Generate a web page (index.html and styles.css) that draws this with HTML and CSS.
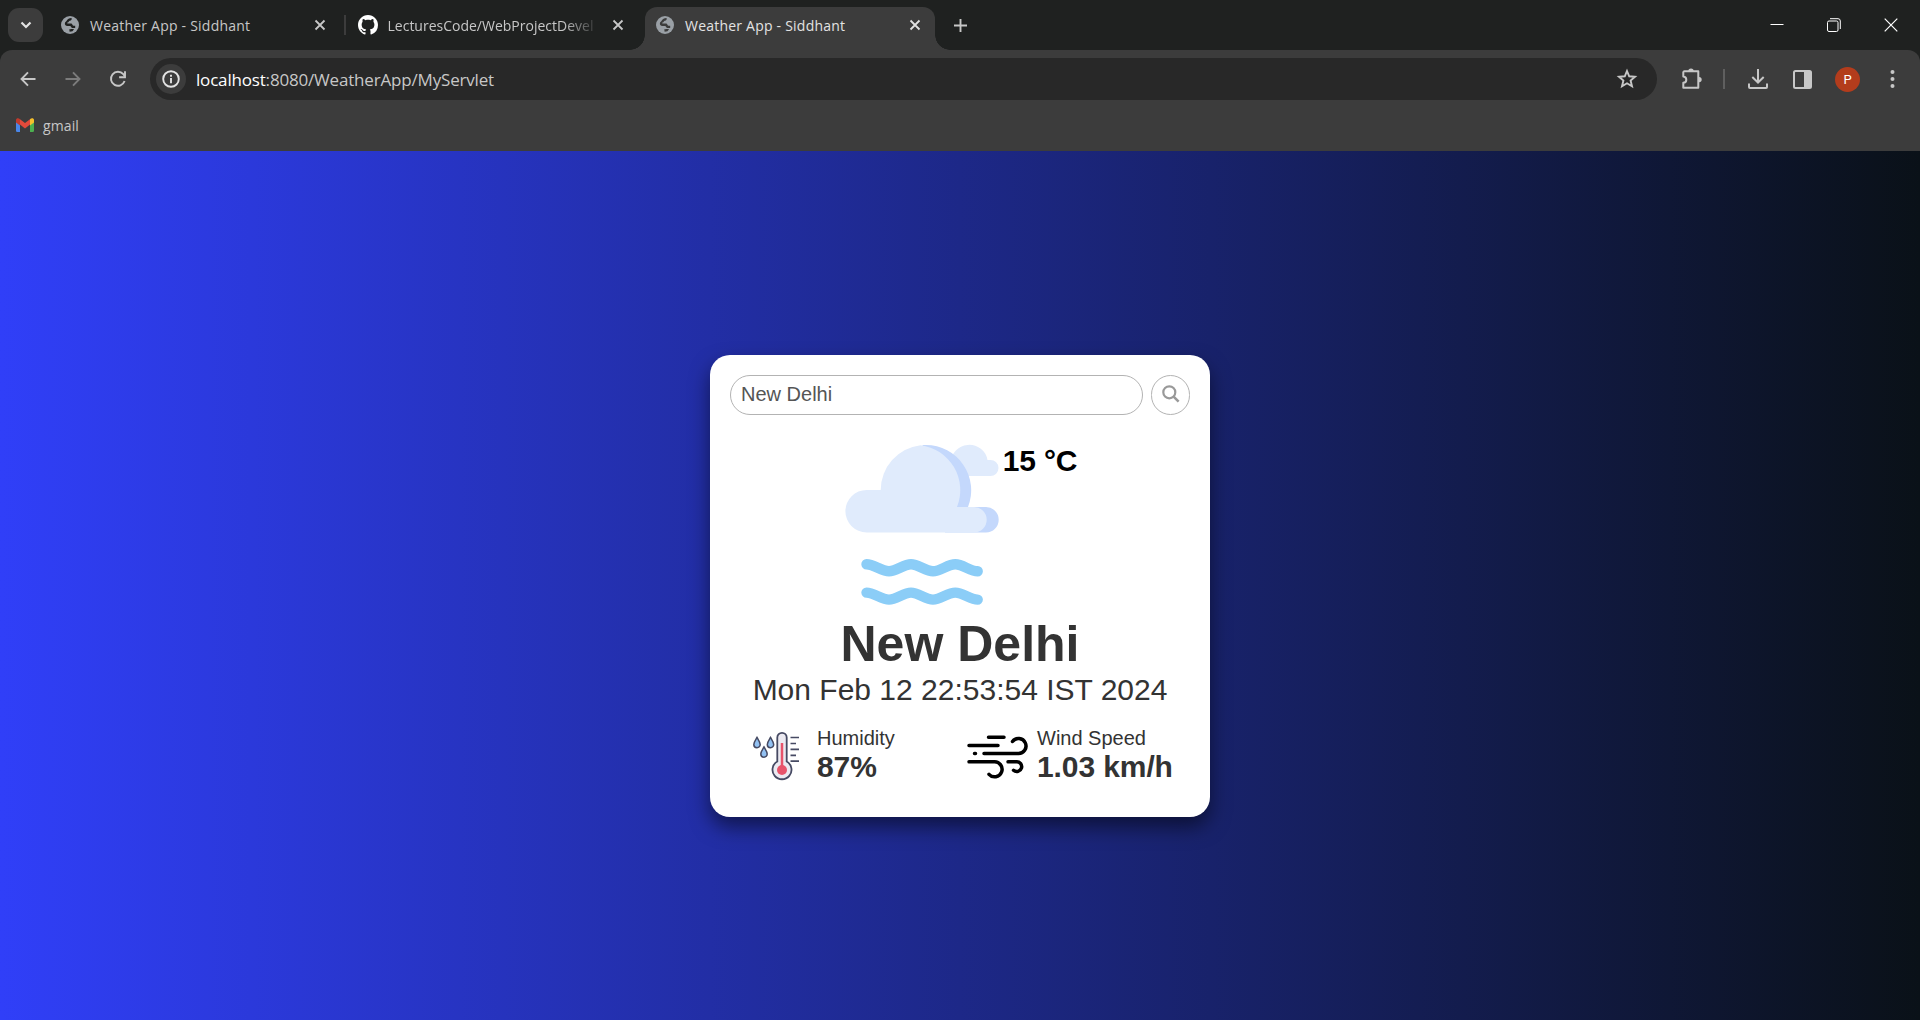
FILE: index.html
```html
<!DOCTYPE html>
<html lang="en">
<head>
<meta charset="utf-8">
<title>Weather App - Siddhant</title>
<link rel="stylesheet" href="styles.css">
</head>
<body>
<svg class="defs" width="0" height="0" aria-hidden="true">
  <symbol id="globe" viewBox="0 0 18 18">
    <circle cx="9" cy="9" r="9" fill="#9aa0a6"/>
    <path fill="currentColor" d="M10.500 2C11.200 3.500 10.300 4.600 8.800 4.700C7.800 4.800 8 6.300 6.600 6.500C5.900 6.700 6 7.500 6.700 7.500H10C11.700 7.600 11 9.500 12.500 9.700H14.200V12H11.500C10 12 10.300 10 8.800 9.900H6.500C4.300 9.800 3.700 8.500 3.900 7.200C4 5.800 5.500 5.600 6 4.300C6.500 3 8.500 1.900 10.500 2Z"/>
    <path fill="currentColor" d="M8.300 13.200C10 13.400 11.500 12.800 13 13.200L11.500 15.200L8.600 15.800Z"/>
  </symbol>
  <symbol id="cross" viewBox="0 0 12 12">
    <path d="M1.500 1.500 10.500 10.500M10.500 1.500 1.500 10.500" stroke="currentColor" stroke-width="1.800" fill="none"/>
  </symbol>
</svg>

<header class="browser">
  <div class="tabstrip">
    <button class="tab-search"><svg width="12" height="8" viewBox="0 0 12 8"><path d="M1.500 1.500 6 6 10.500 1.500" fill="none" stroke="#e3e3e3" stroke-width="2.200"/></svg></button>
    <div class="tabs">
      <div class="tab divided">
        <svg class="favicon"><use href="#globe"/></svg>
        <span class="tab-title">Weather App - Siddhant</span>
        <svg class="tab-close"><use href="#cross"/></svg>
      </div>
      <div class="tab">
        <svg class="favicon github" viewBox="0 0 16 16"><path fill="#fff" d="M8 0C3.580 0 0 3.580 0 8c0 3.540 2.290 6.530 5.470 7.590.4.070.55-.17.55-.38 0-.19-.01-.82-.01-1.490-2.010.37-2.530-.49-2.690-.94-.09-.23-.48-.94-.82-1.130-.28-.15-.68-.52-.01-.53.63-.01 1.080.58 1.230.82.72 1.210 1.870.87 2.330.66.070-.52.28-.87.51-1.070-1.780-.2-3.640-.89-3.640-3.950 0-.87.31-1.590.82-2.150-.08-.2-.36-1.020.08-2.120 0 0 .67-.21 2.200.82.64-.18 1.320-.27 2-.27s1.360.09 2 .27c1.530-1.040 2.200-.82 2.200-.82.44 1.100.16 1.920.08 2.120.51.56.82 1.270.82 2.150 0 3.070-1.870 3.750-3.650 3.950.29.25.54.73.54 1.480 0 1.070-.01 1.930-.01 2.200 0 .21.15.46.55.38A8.010 8.010 0 0 0 16 8c0-4.420-3.580-8-8-8z"/></svg>
        <span class="tab-title faded">LecturesCode/WebProjectDevel</span>
        <svg class="tab-close"><use href="#cross"/></svg>
      </div>
      <div class="tab active">
        <svg class="favicon"><use href="#globe"/></svg>
        <span class="tab-title">Weather App - Siddhant</span>
        <svg class="tab-close"><use href="#cross"/></svg>
      </div>
    </div>
    <svg class="new-tab" viewBox="0 0 13 13"><path d="M6.500 0V13M0 6.500H13" stroke="#c7c7c7" stroke-width="1.900"/></svg>
    <div class="window-controls">
      <svg viewBox="0 0 14 14"><path d="M.5 6.500H13.500" stroke="#fff"/></svg>
      <svg viewBox="0 0 14 14"><rect x=".5" y="3" width="10.500" height="10.500" rx="1.500" fill="none" stroke="#fff"/><path d="M3 .7H11A2.300 2.300 0 0 1 13.300 3V11" fill="none" stroke="#fff"/></svg>
      <svg viewBox="0 0 14 14"><path d="M.7.7 13.300 13.300M13.300.7.7 13.300" stroke="#fff" stroke-width="1.200"/></svg>
    </div>
  </div>

  <div class="toolbar">
    <nav class="nav-buttons">
      <svg viewBox="0 0 16 16"><path d="M15.500 8H1.800M8 1.300 1.500 8 8 14.700" fill="none" stroke="#c7c7c7" stroke-width="1.900"/></svg>
      <svg viewBox="0 0 16 16"><path d="M.5 8H14.200M8 1.300 14.500 8 8 14.700" fill="none" stroke="#7c7c7c" stroke-width="1.900"/></svg>
      <svg viewBox="0 0 16 16"><path d="M14.600 10A7 7 0 1 1 13.300 3.200L14.600 4.800" fill="none" stroke="#c7c7c7" stroke-width="1.900"/><path d="M15 .3V6.200H9.100" fill="none" stroke="#c7c7c7" stroke-width="1.900"/></svg>
    </nav>
    <div class="omnibox">
      <span class="site-info"><svg width="18" height="18" viewBox="0 0 18 18"><circle cx="9" cy="9" r="7.800" fill="none" stroke="#e3e3e3" stroke-width="1.900"/><path d="M9 8V13.200M9 4.800V6.700" stroke="#e3e3e3" stroke-width="1.900"/></svg></span>
      <span class="url"><b>localhost</b>:8080/WeatherApp/MyServlet</span>
      <svg class="star" viewBox="0 0 20 20"><path d="M10 2 12.200 7.300 18 7.800 13.600 11.600 15 17.300 10 14.300 5 17.300 6.400 11.600 2 7.800 7.800 7.300Z" fill="none" stroke="#c7c7c7" stroke-width="1.900"/></svg>
    </div>
    <div class="actions">
      <svg class="puzzle" viewBox="0 0 22 22"><path d="M3.300 3.300H17.300V19.700H2.300V14.800C4.300 14.600 5.300 13.300 5.300 11.700S4.300 8.800 2.300 8.600V4.300A1 1 0 0 1 3.300 3.300Z" fill="none" stroke="#c7c7c7" stroke-width="2" stroke-linejoin="round"/><path d="M7.300 3A2.700 2.500 0 0 1 12.700 3ZM18 8.900A2.700 2.700 0 0 1 18 14.300Z" fill="#c7c7c7"/></svg>
      <i class="divider"></i>
      <svg class="download" viewBox="0 0 20 20"><path d="M10 0V13M4.300 8 10 13.500 15.700 8M1 14.500V18A1 1 0 0 0 2 19H18A1 1 0 0 0 19 18V14.500" fill="none" stroke="#c7c7c7" stroke-width="2"/></svg>
      <svg class="side-panel" viewBox="0 0 19 19"><rect x="1" y="1" width="17" height="17" rx="1.500" fill="none" stroke="#c7c7c7" stroke-width="2"/><path d="M11 1H18V18H11Z" fill="#c7c7c7"/></svg>
      <span class="avatar">P</span>
      <svg class="menu" viewBox="0 0 5 18"><g fill="#c7c7c7"><circle cx="2.500" cy="2" r="2"/><circle cx="2.500" cy="9" r="2"/><circle cx="2.500" cy="16" r="2"/></g></svg>
    </div>
  </div>

  <div class="bookmarks">
    <svg width="18" height="14" viewBox="0 0 18 14">
      <path d="M0 3 4 5.500V14H1.200A1.200 1.200 0 0 1 0 12.800Z" fill="#4a86e8"/>
      <path d="M18 3 14 5.500V14H16.800A1.200 1.200 0 0 0 18 12.800Z" fill="#4caf50"/>
      <path d="M14 1.200C15.500-.5 18 0 18 2V4.600L14 7.500Z" fill="#f5bf2c"/>
      <path d="M4 1.200C2.500-.5 0 0 0 2V4.600L4 7.500Z" fill="#c13a2c"/>
      <path d="M4 1.200 9 5 14 1.200V6.600L9 10.400 4 6.600Z" fill="#e24a3b"/>
    </svg>
    <span>gmail</span>
  </div>
</header>

<main class="page">
  <section class="card">
    <form class="search">
      <input class="search-input" type="text" value="New Delhi">
      <button class="search-button" type="button"><svg width="18" height="18" viewBox="0 0 18 18"><circle cx="7.300" cy="7.300" r="6" fill="none" stroke="#999" stroke-width="2.200"/><path d="M11.600 11.600 16.600 16.600" stroke="#999" stroke-width="2.500"/></svg></button>
    </form>

    <div class="weather">
      <svg class="weather-icon" viewBox="0 0 154 162">
        <path fill="#e0ebfc" d="M105.800 32V19.300A18.500 18.500 0 0 1 142.500 16H145.500A8 8 0 0 1 145.500 32Z"/>
        <path fill="#c4d8fc" d="M77 1H81A45.300 45.300 0 0 1 123 63H141A12.700 12.700 0 0 1 141 88.400H100V20Z"/>
        <path fill="#e0ebfc" d="M21.600 46H35.700A45.300 45.300 0 0 1 75.500 1.200A45.300 45.300 0 0 1 112 63H129A12.700 12.700 0 0 1 129 88.400H21.600A21.200 21.200 0 0 1 21.600 46Z"/>
        <g fill="none" stroke="#8bcdf7" stroke-width="10.400" stroke-linecap="round">
          <path id="wave" d="M21.500 120.300C29 120.300 36.500 127.300 44 127.300S58.500 120.300 66 120.300 80.500 127.300 88 127.300 102.500 120.300 110.300 120.300 125 127.300 132.700 127.300"/>
          <use href="#wave" y="28.300"/>
        </g>
      </svg>
      <h2 class="temperature">15 °C</h2>
    </div>

    <h1 class="city">New Delhi</h1>
    <p class="date">Mon Feb 12 22:53:54 IST 2024</p>

    <div class="stats">
      <div class="stat">
        <svg class="humidity-icon" viewBox="0 0 46 49">
          <g fill="#92c1f2" stroke="#464a63" stroke-width="1.500">
            <path id="drop" d="M4 5.500C5.500 8 7.200 10.200 7.200 12.500A3.200 3.200 0 0 1 .8 12.500C.8 10.200 2.500 8 4 5.500Z"/>
            <use href="#drop" x="13.500"/>
            <use href="#drop" x="7" y="9.500"/>
          </g>
          <path d="M24.300 29.500V5.500A4.700 4.700 0 0 1 33.700 5.500V29.500A9.500 9.500 0 1 1 24.300 29.500Z" fill="#eceaf1" stroke="#464a63" stroke-width="1.800"/>
          <path d="M29 11V38" stroke="#e8546b" stroke-width="2.500"/>
          <circle cx="29" cy="38" r="5" fill="#e8546b"/>
          <path d="M37.500 5.500H46M37.500 11.500H43M37.500 17.300H46M37.500 23.300H43M37.500 29.200H46" stroke="#464a63" stroke-width="1.700"/>
        </svg>
        <div><p class="stat-label">Humidity</p><p class="stat-value">87%</p></div>
      </div>
      <div class="stat wind">
        <svg class="wind-icon" viewBox="0 0 60 43">
          <g fill="none" stroke="#000" stroke-width="3.500" stroke-linecap="round">
            <path d="M21.500 2.200H37M2 10.500H31M7.500 18.500H8.500M17 18.500H51A7.500 7.500 0 1 0 45.500 6.500"/>
            <path d="M2 26.800H27A7.500 7.500 0 1 1 22 39.300M41 26.800H49A4.900 4.900 0 1 1 46.500 35.300"/>
          </g>
        </svg>
        <div><p class="stat-label">Wind Speed</p><p class="stat-value">1.03 km/h</p></div>
      </div>
    </div>
  </section>
</main>
</body>
</html>
```
FILE: styles.css
```css
* { box-sizing: border-box; margin: 0; padding: 0; }
body {
  height: 1020px;
  overflow: hidden;
  display: flex;
  flex-direction: column;
  font-family: "Liberation Sans", Arial, sans-serif;
}
button { border: 0; background: none; }
svg { display: block; flex: none; overflow: visible; }
.defs { position: absolute; }

/* Browser frame */
.browser {
  height: 151px;
  background: #1f2120;
  color: #c7c7c7;
  font-family: "Open Sans", "Noto Sans", sans-serif;
}
.tabstrip { height: 50px; display: flex; align-items: center; padding-left: 8px; }
.tab-search {
  width: 35px; height: 34px;
  border-radius: 11px;
  background: #3c3c3c;
  display: flex; align-items: center; justify-content: center;
}
.tabs { display: flex; gap: 7.5px; margin-left: 7px; align-self: stretch; }
.tab {
  position: relative;
  width: 290px;
  height: 43px;
  margin-top: 7px;
  padding: 0 14px 7px 11px;
  display: flex; align-items: center;
}
.divided::after {
  content: "";
  position: absolute; right: -6px; top: 8px;
  width: 2px; height: 20px;
  background: #3c3c3c;
}
.favicon { width: 18px; height: 18px; color: #1f2120; }
.active .favicon { color: #3c3c3c; }
.github { width: 20px; height: 20px; margin: 0 -1px 0 -1px; }
.tab-title {
  width: 208px;
  margin-left: 11px;
  font-size: 14px;
  letter-spacing: 0.22px;
  white-space: nowrap;
}
.faded { letter-spacing: 0; mask-image: linear-gradient(to right, #000 175px, transparent 212px); }
.tab-close { width: 12px; height: 12px; margin-left: auto; color: #c7c7c7; }
.active { background: #3c3c3c; border-radius: 12px 12px 0 0; color: #e3e3e3; }
.active .tab-close { color: #e3e3e3; }
.active::before, .active::after {
  content: "";
  position: absolute; bottom: 0;
  width: 15px; height: 15px;
}
.active::before { left: -15px; background: radial-gradient(circle at 0 0, transparent 14.5px, #3c3c3c 15px); }
.active::after { right: -15px; background: radial-gradient(circle at 100% 0, transparent 14.5px, #3c3c3c 15px); }
.new-tab { width: 13px; height: 13px; margin-left: 19px; }
.window-controls { display: flex; gap: 43px; margin-left: auto; padding-right: 22px; }
.window-controls svg { width: 14px; height: 14px; }

.toolbar {
  height: 58px;
  padding: 8px 25px 8px 20px;
  border-radius: 12px 12px 0 0;
  background: #3c3c3c;
  display: flex; align-items: center;
}
.nav-buttons { display: flex; gap: 29px; width: 130px; }
.nav-buttons svg { width: 16px; height: 16px; }
.omnibox {
  width: 1507px; height: 42px;
  padding: 0 20px 0 6px;
  border-radius: 21px;
  background: #282828;
  display: flex; align-items: center;
}
.site-info {
  width: 30px; height: 30px;
  border-radius: 50%;
  background: #3c3c3c;
  display: flex; align-items: center; justify-content: center;
}
.url { margin-left: 10px; font-size: 17px; letter-spacing: -0.18px; color: #c7c7c7; }
.url b { font-weight: 400; color: #fff; }
.star { width: 20px; height: 20px; margin-left: auto; }
.actions { flex: 1; display: flex; align-items: center; padding-left: 24px; }
.puzzle { width: 22px; height: 22px; }
.divider { width: 2px; height: 20px; margin: 0 23px 0 20px; background: #5f5f5f; }
.download { width: 20px; height: 20px; }
.side-panel { width: 19px; height: 19px; margin-left: 25px; }
.avatar {
  width: 25px; height: 25px;
  margin: 0 auto 0 23px;
  border-radius: 50%;
  background: #b33c1c;
  color: #fff;
  font: 13px/25px Roboto, sans-serif;
  text-align: center;
}
.menu { width: 5px; height: 18px; }
.bookmarks {
  height: 43px;
  padding: 0 16px 9px;
  background: #3c3c3c;
  display: flex; align-items: center; gap: 9px;
  font-size: 14px;
  letter-spacing: .1px;
}

/* Weather page */
.page {
  flex: 1;
  display: flex; align-items: center; justify-content: center;
  background: linear-gradient(to right, #303ff8, #0a1118);
}
.card {
  width: 500px; height: 462px;
  padding: 20px;
  border-radius: 20px;
  background: #fff;
  color: #333;
  box-shadow: 0 10px 20px rgba(0, 0, 0, .5);
}
.search { display: flex; justify-content: space-between; }
.search-input {
  width: 413px; height: 40px;
  padding: 0 10px;
  border: 1px solid #b3b3b3;
  border-radius: 20px;
  font: 20px "Liberation Sans", Arial, sans-serif;
  color: #555;
  outline: 0;
}
.search-button {
  width: 39px; height: 40px;
  padding-bottom: 2px;
  border: 1px solid #b3b3b3;
  border-radius: 20px;
  display: flex; align-items: center; justify-content: center;
}
.weather { display: flex; justify-content: center; height: 201px; padding: 29px 0 0 2px; }
.weather-icon { width: 154px; height: 162px; }
.temperature { margin-left: 4px; font-size: 30px; line-height: 34px; letter-spacing: -.2px; color: #000; }
.city { font-size: 50px; line-height: 57px; text-align: center; }
.date { font-size: 30px; line-height: 34px; text-align: center; }
.stats { display: flex; margin-top: 20px; padding-left: 23px; }
.stat { display: flex; align-items: flex-start; width: 214px; }
.humidity-icon { width: 46px; height: 49px; margin: 5px 18px 0 0; }
.wind { width: auto; }
.wind-icon { width: 60px; height: 43px; margin: 8px 10px 0 0; }
.stat-label { font-size: 20px; line-height: 23px; }
.stat-value { font-size: 30px; line-height: 34px; font-weight: 700; letter-spacing: -.1px; white-space: nowrap; }
```
